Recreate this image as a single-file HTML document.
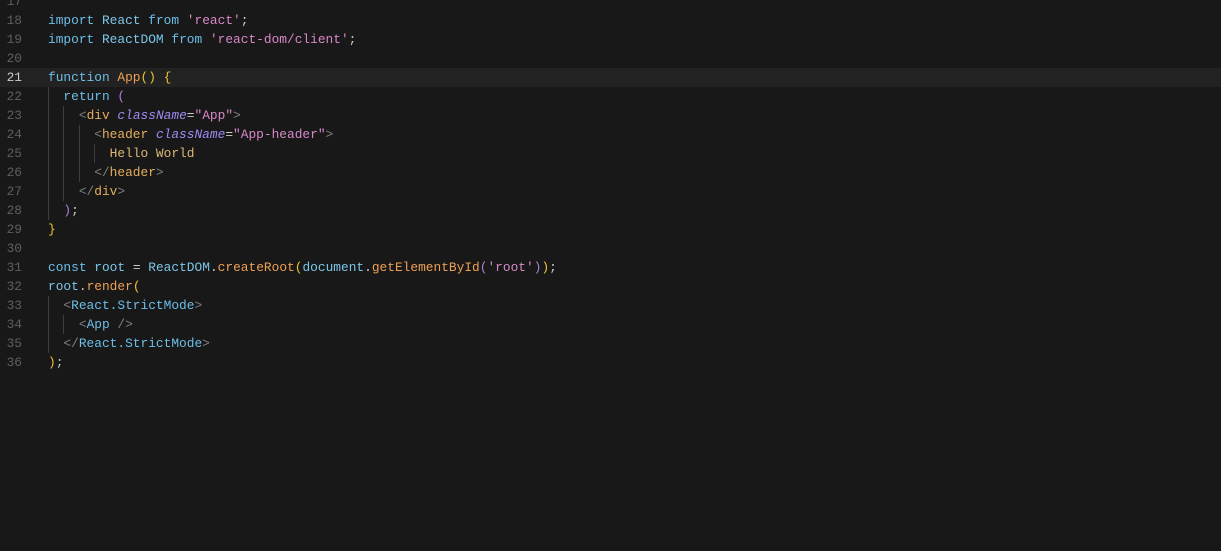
<!DOCTYPE html>
<html><head><meta charset="utf-8"><style>
body{margin:0;width:1221px;height:551px;background:#181818;overflow:hidden;font-family:"Liberation Mono",monospace;font-size:12.85px;}
.l{position:absolute;left:0;height:19px;line-height:19px;width:1221px;white-space:pre;}
.n{position:absolute;left:0;width:22px;text-align:right;color:#5e5e5e;}
.c{position:absolute;left:48px;color:#cccccc;}
.hl{background:#222222;}
.g{position:absolute;width:1px;background:#3e3e3e;}
.k{color:#6cbee8}.i{color:#7cc6ea}.s{color:#d888c8}.f{color:#eea055}.y{color:#f0c030}.p{color:#b07ee0}.t{color:#808080}.tn{color:#e4ae5c}.a{color:#a08af0;font-style:italic}.h{color:#dcb874}.w{color:#cccccc}
</style></head><body>
<div class="g" style="left:48px;top:87px;height:133px"></div>
<div class="g" style="left:63px;top:106px;height:95px"></div>
<div class="g" style="left:79px;top:125px;height:57px"></div>
<div class="g" style="left:94px;top:144px;height:19px"></div>
<div class="g" style="left:48px;top:296px;height:57px"></div>
<div class="g" style="left:63px;top:315px;height:19px"></div>

<div class="l" style="top:-8px"><span class="n">17</span></div>
<div class="l" style="top:11px"><span class="n">18</span><span class="c"><span class="k">import</span> <span class="i">React</span> <span class="k">from</span> <span class="s">'react'</span><span class="w">;</span></span></div>
<div class="l" style="top:30px"><span class="n">19</span><span class="c"><span class="k">import</span> <span class="i">ReactDOM</span> <span class="k">from</span> <span class="s">'react-dom/client'</span><span class="w">;</span></span></div>
<div class="l" style="top:49px"><span class="n">20</span></div>
<div class="l hl" style="top:68px"><span class="n" style="color:#cccccc">21</span><span class="c"><span class="k">function</span> <span class="f">App</span><span class="y">()</span> <span class="y">{</span></span></div>
<div class="l" style="top:87px"><span class="n">22</span><span class="c">  <span class="k">return</span> <span class="p">(</span></span></div>
<div class="l" style="top:106px"><span class="n">23</span><span class="c">    <span class="t">&lt;</span><span class="tn">div</span> <span class="a">className</span><span class="w">=</span><span class="s">"App"</span><span class="t">&gt;</span></span></div>
<div class="l" style="top:125px"><span class="n">24</span><span class="c">      <span class="t">&lt;</span><span class="tn">header</span> <span class="a">className</span><span class="w">=</span><span class="s">"App-header"</span><span class="t">&gt;</span></span></div>
<div class="l" style="top:144px"><span class="n">25</span><span class="c">        <span class="h">Hello World</span></span></div>
<div class="l" style="top:163px"><span class="n">26</span><span class="c">      <span class="t">&lt;/</span><span class="tn">header</span><span class="t">&gt;</span></span></div>
<div class="l" style="top:182px"><span class="n">27</span><span class="c">    <span class="t">&lt;/</span><span class="tn">div</span><span class="t">&gt;</span></span></div>
<div class="l" style="top:201px"><span class="n">28</span><span class="c">  <span class="p">)</span><span class="w">;</span></span></div>
<div class="l" style="top:220px"><span class="n">29</span><span class="c"><span class="y">}</span></span></div>
<div class="l" style="top:239px"><span class="n">30</span></div>
<div class="l" style="top:258px"><span class="n">31</span><span class="c"><span class="k">const</span> <span class="i">root</span> <span class="w">=</span> <span class="i">ReactDOM</span><span class="w">.</span><span class="f">createRoot</span><span class="y">(</span><span class="i">document</span><span class="w">.</span><span class="f">getElementById</span><span class="p">(</span><span class="s">'root'</span><span class="p">)</span><span class="y">)</span><span class="w">;</span></span></div>
<div class="l" style="top:277px"><span class="n">32</span><span class="c"><span class="i">root</span><span class="w">.</span><span class="f">render</span><span class="y">(</span></span></div>
<div class="l" style="top:296px"><span class="n">33</span><span class="c">  <span class="t">&lt;</span><span class="k">React.StrictMode</span><span class="t">&gt;</span></span></div>
<div class="l" style="top:315px"><span class="n">34</span><span class="c">    <span class="t">&lt;</span><span class="k">App</span> <span class="t">/&gt;</span></span></div>
<div class="l" style="top:334px"><span class="n">35</span><span class="c">  <span class="t">&lt;/</span><span class="k">React.StrictMode</span><span class="t">&gt;</span></span></div>
<div class="l" style="top:353px"><span class="n">36</span><span class="c"><span class="y">)</span><span class="w">;</span></span></div>
</body></html>
